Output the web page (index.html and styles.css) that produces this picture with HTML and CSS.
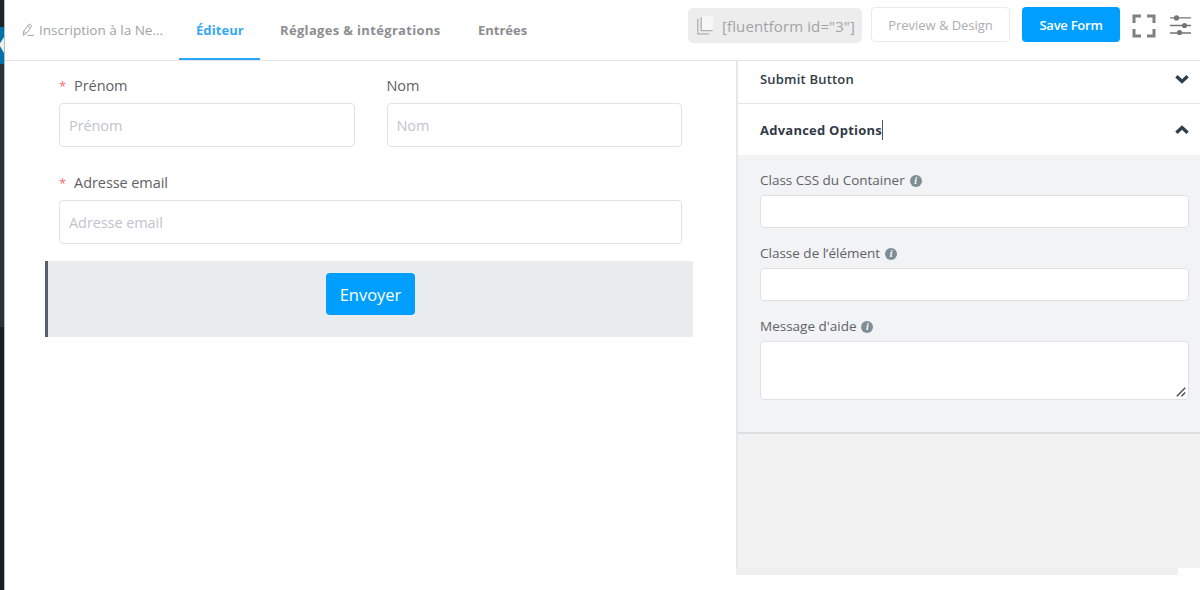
FILE: index.html
```html
<!DOCTYPE html>
<html lang="fr">
<head>
<meta charset="utf-8">
<title>Éditeur de formulaire</title>
<link rel="stylesheet" href="styles.css">
</head>
<body>
<div class="app">
  <aside class="rail"><span class="rail-current"></span></aside>
  <div class="screen">
    <header class="topbar">
      <div class="form-name">
        <svg class="pen" width="13" height="14" viewBox="0 0 13 14" fill="none" stroke="#a5a7aa" stroke-width="1"><path d="M1.2 12.3 1.6 8.3 6.7 1.4Q7.2.8 7.9 1.3L9.3 2.4Q9.9 2.9 9.4 3.6L4.4 10.4 1.2 12.3ZM5.8 2.8 8.4 4.8M1.7 8.3 4.4 10.4M5.5 12.4H12"/></svg>
        <span>Inscription à la Ne...</span>
      </div>
      <nav class="tabs">
        <a class="tab tab-active">Éditeur</a>
        <a class="tab tab-settings">Réglages &amp; intégrations</a>
        <a class="tab tab-entries">Entrées</a>
      </nav>
      <div class="actions">
        <div class="shortcode">
          <svg width="16" height="19" viewBox="0 0 16 19"><path d="M4 0h12v14H4z" fill="#f7f7f7"/><path d="M.8 3v14.9H12M4.2 1v13.6H15.5" fill="none" stroke="#b0b0b0" stroke-width="1.3"/></svg>
          <span>[fluentform id="3"]</span>
        </div>
        <button class="btn btn-preview">Preview &amp; Design</button>
        <button class="btn btn-save">Save Form</button>
        <svg class="expand" width="24" height="24" viewBox="0 0 24 24" fill="none" stroke="#808080" stroke-width="3"><path d="M2 9V2H9M15 2H22V9M22 15V22H15M9 22H2V15"/></svg>
        <svg class="sliders" width="21" height="20" viewBox="0 0 21 20" fill="#757575"><path d="M0 2.2h21v1.4H0zM0 9.8h21v1.4H0zM0 17.3h21v1.4H0z"/><circle cx="6.5" cy="2.9" r="2.6"/><circle cx="14.5" cy="10.5" r="2.6"/><circle cx="9.5" cy="17.6" r="2.6"/></svg>
      </div>
    </header>
    <div class="workspace">
      <main class="canvas">
        <div class="row">
          <div class="field">
            <label class="label required">Prénom</label>
            <div class="input">Prénom</div>
          </div>
          <div class="field">
            <label class="label">Nom</label>
            <div class="input">Nom</div>
          </div>
        </div>
        <div class="field email">
          <label class="label required">Adresse email</label>
          <div class="input">Adresse email</div>
        </div>
        <div class="submit-row"><button class="submit">Envoyer</button></div>
      </main>
      <aside class="panel">
        <div class="section section-submit">
          <span>Submit Button</span>
          <svg width="14" height="9" viewBox="0 0 14 9" fill="none" stroke="#2f3d4a" stroke-width="3.3"><path d="M1.4 1.3 7 6.5 12.6 1.3"/></svg>
        </div>
        <div class="section section-advanced">
          <span class="caret">Advanced Options</span>
          <svg width="14" height="9" viewBox="0 0 14 9" fill="none" stroke="#2f3d4a" stroke-width="3.3"><path d="M1.4 7.7 7 2.5 12.6 7.7"/></svg>
        </div>
        <div class="options">
          <label class="option-label">Class CSS du Container<i class="info">i</i></label>
          <div class="option-input"></div>
          <label class="option-label">Classe de l’élément<i class="info">i</i></label>
          <div class="option-input"></div>
          <label class="option-label">Message d'aide<i class="info">i</i></label>
          <div class="option-input area">
            <svg width="10" height="10" viewBox="0 0 10 10" stroke="#444" stroke-width="1.3"><path d="M.8 9.2 9.2 .8M5.5 9.2 9.2 5.5"/></svg>
          </div>
        </div>
        <div class="panel-foot"></div>
      </aside>
    </div>
  </div>
</div>
</body>
</html>
```

FILE: styles.css
```css
* { box-sizing: border-box; }
body { margin: 0; background: #fff; font-family: "Open Sans", "Noto Sans", sans-serif; overflow: hidden; }
button { font-family: inherit; padding: 0; }
.app { display: flex; width: 1200px; height: 590px; }

.rail { width: 5px; flex: none; background: linear-gradient(#1d2327 0 27px, #eee 27px 64px, #2c3338 64px 327px, #191e23 327px); border-right: 1px solid #b9bcbe; display: flex; flex-direction: column; padding-top: 27px; }
.rail-current { height: 37px; background: #0073aa; clip-path: polygon(0 0, 100% 0, 100% 27%, 0 44%, 0 52%, 100% 70%, 100% 100%, 0 100%); }

.screen { flex: 1; display: flex; flex-direction: column; min-width: 0; }
.topbar { height: 61px; flex: none; border-bottom: 1px solid #e4e5e7; display: flex; padding-left: 17px; }
.form-name { width: 157px; display: flex; align-items: flex-start; gap: 4px; color: #a1a3a6; font-size: 13.5px; line-height: 20px; padding-top: 20px; white-space: nowrap; }
.pen { margin-top: 3px; flex: none; }
.tabs { display: flex; height: 59.5px; gap: 4px; }
.tab { padding: 20px 16px 0 17px; font-size: 13px; line-height: 20px; font-weight: 700; color: #8c8e91; white-space: nowrap; }
.tab-active { color: #35a8f7; border-bottom: 2px solid #2ba6fb; width: 81px; letter-spacing: .08px; }
.tab-settings { width: 194px; padding-left: 16px; letter-spacing: .33px; }
.tab-entries { width: 82px; padding-left: 16px; }
.actions { margin-left: auto; display: flex; align-items: flex-start; padding: 7px 9px 0 0; }
.shortcode { width: 174px; height: 35px; margin: 1px 9px 0 0; padding-left: 9px; background: #ededed; border-radius: 5px; display: flex; align-items: center; gap: 9px; color: #a4a4a4; font-size: 15px; letter-spacing: .11px; white-space: nowrap; }
.btn { height: 35px; border-radius: 4px; font-size: 13px; white-space: nowrap; }
.btn-preview { width: 139px; margin-right: 12px; background: #fff; border: 1px solid #ebebed; color: #acaeb0; letter-spacing: -.04px; }
.btn-save { width: 98px; background: #009fff; border: 0; color: #fff; font-weight: 600; letter-spacing: -.25px; }
.expand { margin: 7px 14px 0 12px; }
.sliders { margin-top: 8px; }

.workspace { flex: 1; display: flex; min-height: 0; }
.canvas { width: 731px; padding: 14px 0 0 40px; }
.row { display: flex; gap: 32px; padding-left: 14px; }
.row .field { width: 295.5px; }
.label { display: block; height: 28px; line-height: 21px; font-size: 14.5px; letter-spacing: -.08px; color: #606266; white-space: nowrap; }
.required::before { content: "*"; color: #f56c6c; margin-right: 8px; font-size: 13px; }
.input { height: 44px; border: 1px solid #dfe2e8; border-radius: 4px; padding-left: 9px; line-height: 43px; font-size: 14.5px; letter-spacing: -.08px; color: #c0c4cc; }
.email { margin: 25px 0 0 14px; width: 623px; }
.email .input { line-height: 44px; }
.submit-row { width: 648px; height: 76px; margin-top: 17px; border-left: 3px solid #56606a; background: #e9edf0; display: flex; justify-content: center; align-items: flex-start; padding-top: 12px; }
.submit { width: 89px; height: 42px; border: 0; border-radius: 4px; background: #009fff; color: #fff; font-size: 16.5px; }

.panel { width: 464px; border-left: 2px solid #e6e7e9; height: 507px; display: flex; flex-direction: column; }
.section { display: flex; justify-content: space-between; align-items: center; padding: 0 11px 0 22px; color: #303b47; font-size: 13px; font-weight: 700; flex: none; }
.section-submit { height: 43px; padding-bottom: 6px; border-bottom: 1px solid #e2e4e7; font-weight: 600; letter-spacing: .2px; }
.section-advanced { height: 51px; letter-spacing: .24px; }
.caret { border-right: 1px solid #555; line-height: 20px; }
.options { background: #f2f3f5; height: 279px; padding: 15px 11px 0 22px; border-bottom: 2px solid #dddedf; flex: none; }
.option-label { display: flex; align-items: center; gap: 5px; height: 25px; padding-bottom: 6px; color: #606266; font-size: 13.5px; white-space: nowrap; }
.info { width: 12px; height: 12px; border-radius: 50%; background: #7e8d96; color: #fff; font: italic bold 10px/12px "Liberation Serif", serif; text-align: center; margin-top: 3px; }
.option-input { height: 33px; border: 1px solid #dfe1e7; border-radius: 4px; background: #fff; margin-bottom: 15px; }
.area { height: 59px; display: flex; justify-content: flex-end; align-items: flex-end; padding: 2px; }
.panel-foot { flex: 1; background: #f2f2f2; }
.panel::after { content: ""; flex: none; height: 7px; margin: 0 22px -7px -2px; background: #efefef; }
```
